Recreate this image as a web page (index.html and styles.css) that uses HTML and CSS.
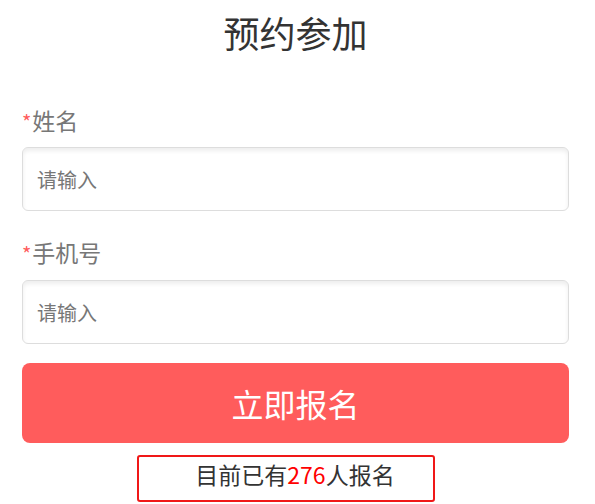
FILE: index.html
```html
<!DOCTYPE html>
<html lang="zh-CN">
<head>
  <meta charset="UTF-8" />
  <meta name="viewport" content="width=device-width, initial-scale=1.0" />
  <title>预约参加</title>
  <link rel="stylesheet" href="styles.css">
</head>
<body>
  <main class="page">
    <h1 class="title">预约参加</h1>

    <form class="form" onsubmit="return false">
      <label class="label" for="name"><span class="star">*</span>姓名</label>
      <input class="field" id="name" type="text" placeholder="请输入" />

      <label class="label" for="phone"><span class="star">*</span>手机号</label>
      <input class="field" id="phone" type="tel" placeholder="请输入" />

      <button class="submit" type="submit">立即报名</button>
    </form>

    <p class="count">目前已有<span class="num">276</span>人报名</p>
  </main>
</body>
</html>
```

FILE: styles.css
```css
body {
  margin: 0;
  background: #fff;
  font-family: "Noto Sans CJK SC", "Noto Sans", sans-serif;
  color: #333;
}

.page {
  padding: 0 26px 0 22px;
}

.title {
  margin: 0 0 47px;
  padding-top: 7px;
  font-size: 36px;
  line-height: 50px;
  font-weight: normal;
  text-align: center;
  color: #333;
}

.form {
  display: flex;
  flex-direction: column;
}

.label {
  height: 32px;
  font-size: 23px;
  line-height: 32px;
  color: #777;
}

.star {
  color: #ff5c5c;
  font-size: 20px;
  line-height: 0;
  margin-right: 1px;
}

.field {
  box-sizing: border-box;
  height: 64px;
  margin: 11px 0 25px;
  padding: 0 14px;
  border: 1px solid #ddd;
  border-radius: 6px;
  box-shadow: inset 0 3px 4px rgba(0, 0, 0, 0.07);
  font-family: inherit;
  font-size: 20px;
  color: #333;
  outline: none;
}

.field::placeholder {
  color: #777;
}

.field:last-of-type {
  margin: 12px 0 19px;
}

.submit {
  height: 80px;
  border: none;
  border-radius: 8px;
  background: #ff5c5c;
  color: #fff;
  font-family: inherit;
  font-size: 32px;
  cursor: pointer;
}

.count {
  box-sizing: border-box;
  height: 47px;
  width: 298px;
  margin: 12px 0 0 115px;
  padding: 0 0 9px 18px;
  border: 2px solid #f01818;
  border-radius: 3px;
  font-size: 23px;
  line-height: 34px;
  text-align: center;
  color: #333;
}

.num {
  color: #ff0000;
}
```
